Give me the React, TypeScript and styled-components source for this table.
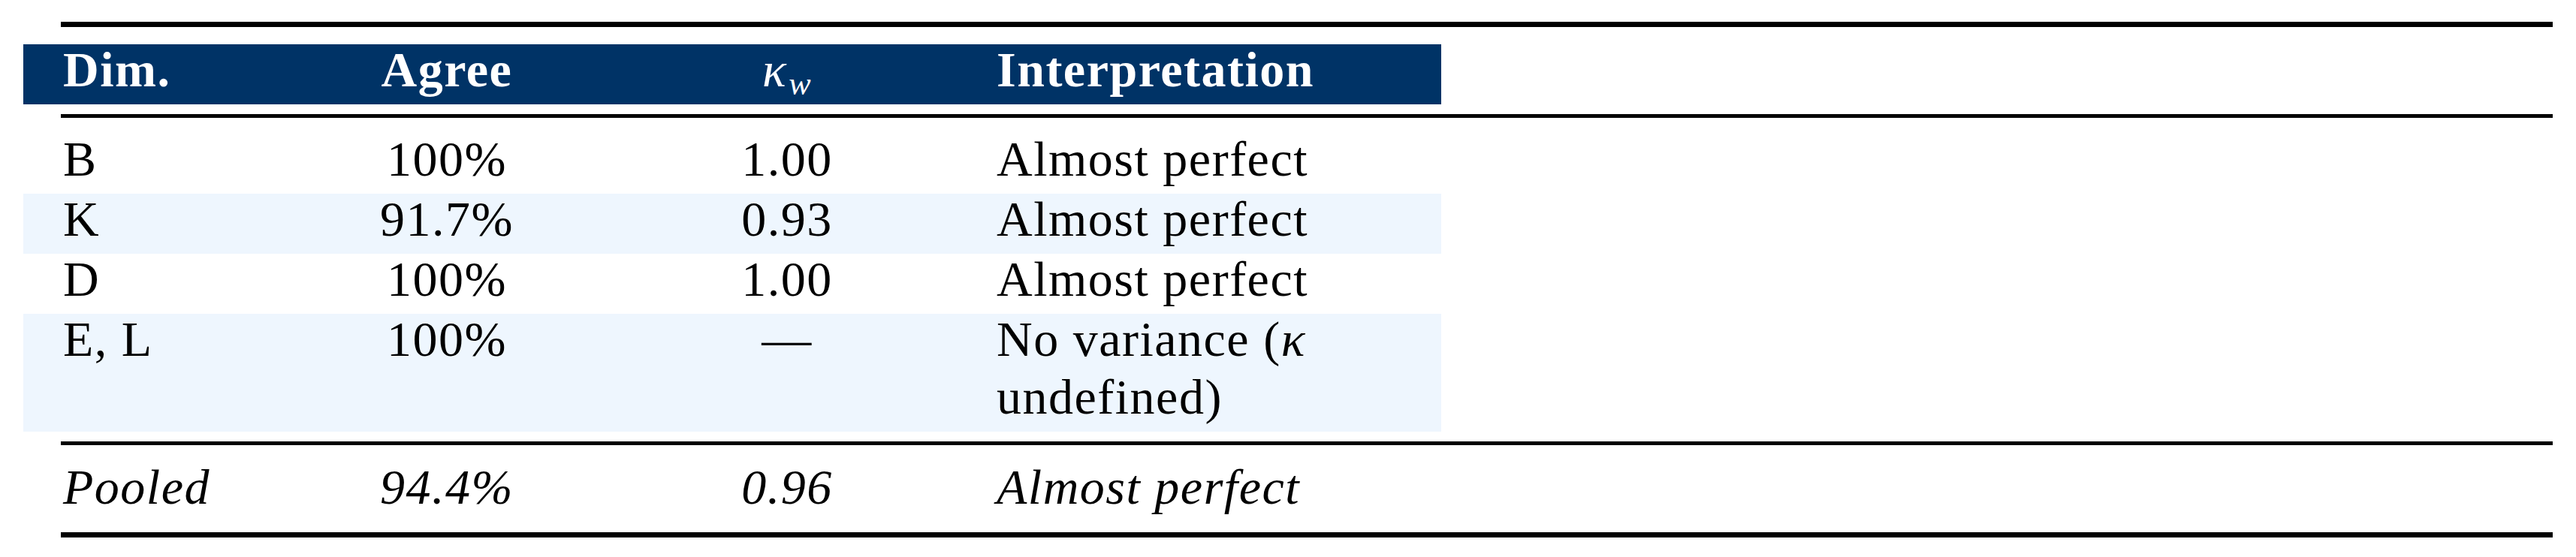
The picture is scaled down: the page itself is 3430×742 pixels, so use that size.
import React from "react";
import styled, { createGlobalStyle } from "styled-components";

const Global = createGlobalStyle`
  html, body {
    margin: 0;
    padding: 0;
    background: #ffffff;
  }
  body {
    font-family: "Liberation Serif", "Times New Roman", serif;
  }
`;

const Page = styled.div`
  width: 3430px;
  height: 742px;
  box-sizing: border-box;
  padding: 29px 31px 0 31px;
  display: flex;
  flex-direction: column;
  font-family: "Liberation Serif", "Times New Roman", serif;
  font-size: 66px;
  letter-spacing: 1.5px;
  color: #000000;
`;

const Rule = styled.div<{ $h: number; $after: number }>`
  flex: none;
  height: ${(p) => p.$h}px;
  margin-left: 50px;
  margin-bottom: ${(p) => p.$after}px;
  background: #000000;
`;

const Row = styled.div<{ $bg: string; $after?: number }>`
  flex: none;
  width: 1888px;
  display: grid;
  grid-template-columns: 369px 390px 516px 613px;
  background: ${(p) => p.$bg};
  color: ${(p) => (p.$bg === "#003366" ? "#ffffff" : "#000000")};
  font-weight: ${(p) => (p.$bg === "#003366" ? 700 : 400)};
  margin-bottom: ${(p) => p.$after ?? 0}px;
`;

const Body = styled.div`
  flex: none;
  display: flex;
  flex-direction: column;
  margin-bottom: 13px;
`;

const Cell = styled.div<{ $kind: "first" | "center" | "last"; $italic?: boolean }>`
  box-sizing: border-box;
  margin-top: -5px;
  padding-bottom: 8px;
  line-height: 77px;
  white-space: ${(p) => (p.$kind === "last" ? "normal" : "nowrap")};
  text-align: ${(p) => (p.$kind === "center" ? "center" : "left")};
  padding-left: ${(p) => (p.$kind === "first" ? 53 : p.$kind === "last" ? 21 : 0)}px;
  padding-right: ${(p) => (p.$kind === "last" ? 89 : 0)}px;
  font-style: ${(p) => (p.$italic ? "italic" : "normal")};
`;

const Kappa = styled.span`
  font-style: italic;
  font-weight: 400;
`;

const Sub = styled.span`
  font-style: italic;
  font-weight: 400;
  font-size: 44px;
  line-height: 0;
  vertical-align: -11px;
  margin-left: 2px;
`;

type RowData = {
  dim: string;
  agree: string;
  kappa: string;
  interp: React.ReactNode;
};

const rows: RowData[] = [
  { dim: "B", agree: "100%", kappa: "1.00", interp: "Almost perfect" },
  { dim: "K", agree: "91.7%", kappa: "0.93", interp: "Almost perfect" },
  { dim: "D", agree: "100%", kappa: "1.00", interp: "Almost perfect" },
  {
    dim: "E, L",
    agree: "100%",
    kappa: "\u2014",
    interp: (
      <>
        No variance (<Kappa>κ</Kappa> undefined)
      </>
    ),
  },
];

export default function App() {
  return (
    <>
      <Global />
      <Page>
        <Rule $h={7} $after={23} />
        <Row $bg="#003366" $after={13}>
          <Cell $kind="first">Dim.</Cell>
          <Cell $kind="center">Agree</Cell>
          <Cell $kind="center">
            <Kappa>κ</Kappa>
            <Sub>w</Sub>
          </Cell>
          <Cell $kind="last">Interpretation</Cell>
        </Row>
        <Rule $h={5} $after={21} />
        <Body>
          {rows.map((r, i) => (
            <Row key={r.dim} $bg={i % 2 === 1 ? "#eef6fe" : "#ffffff"}>
              <Cell $kind="first">{r.dim}</Cell>
              <Cell $kind="center">{r.agree}</Cell>
              <Cell $kind="center">{r.kappa}</Cell>
              <Cell $kind="last">{r.interp}</Cell>
            </Row>
          ))}
        </Body>
        <Rule $h={5} $after={22} />
        <Row $bg="#ffffff" $after={14}>
          <Cell $kind="first" $italic>
            Pooled
          </Cell>
          <Cell $kind="center" $italic>
            94.4%
          </Cell>
          <Cell $kind="center" $italic>
            0.96
          </Cell>
          <Cell $kind="last" $italic>
            Almost perfect
          </Cell>
        </Row>
        <Rule $h={7} $after={0} />
      </Page>
    </>
  );
}
